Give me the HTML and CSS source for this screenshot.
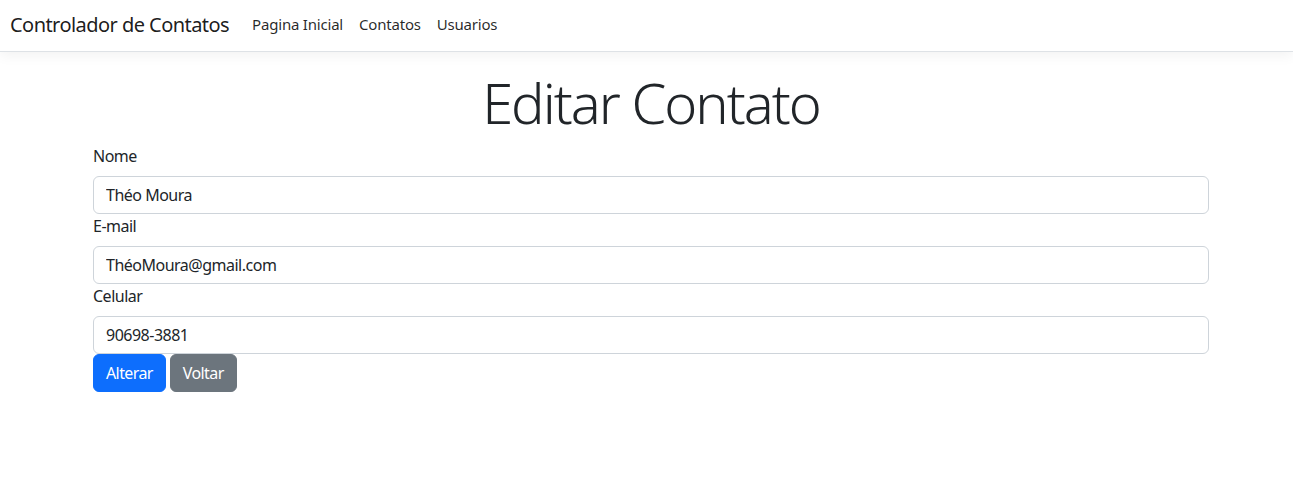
FILE: index.html
```html
<!DOCTYPE html>
<html lang="pt-BR">
<head>
<meta charset="utf-8">
<title>Editar Contato</title>
<link rel="stylesheet" href="styles.css">
</head>
<body>
<header class="navbar">
  <a class="brand" href="#">Controlador de Contatos</a>
  <nav class="nav">
    <a class="nav-link" href="#">Pagina Inicial</a>
    <a class="nav-link" href="#">Contatos</a>
    <a class="nav-link" href="#">Usuarios</a>
  </nav>
</header>
<main class="container">
  <h1 class="title">Editar Contato</h1>
  <form class="form">
    <label class="form-label" for="nome">Nome</label>
    <input class="form-control" id="nome" type="text" value="Théo Moura">
    <label class="form-label" for="email">E-mail</label>
    <input class="form-control" id="email" type="text" value="ThéoMoura@gmail.com">
    <label class="form-label" for="celular">Celular</label>
    <input class="form-control" id="celular" type="text" value="90698-3881">
    <div class="actions">
      <button class="btn btn-primary" type="button">Alterar</button>
      <button class="btn btn-secondary" type="button">Voltar</button>
    </div>
  </form>
</main>
</body>
</html>
```

FILE: styles.css
```css
* { box-sizing: border-box; }
html, body { margin: 0; padding: 0; }
body {
  font-family: "Segoe UI", "Noto Sans", "Open Sans", sans-serif;
  font-size: 16px;
  line-height: 1.5;
  letter-spacing: -0.5px;
  color: #212529;
  background: #fff;
}
.navbar {
  height: 52px;
  display: flex;
  align-items: center;
  padding: 0 10px 2px;
  border-bottom: 1px solid #dee2e6;
  box-shadow: 0 4px 12px rgba(0,0,0,0.05);
  background: #fff;
}
.brand {
  font-size: 20px;
  letter-spacing: -0.55px;
  color: rgba(0,0,0,0.9);
  text-decoration: none;
  margin-right: 15px;
}
.nav { display: flex; }
.nav-link {
  padding: 0 8px;
  color: rgba(0,0,0,0.85);
  text-decoration: none;
  font-size: 15px;
  letter-spacing: -0.2px;
}
.container {
  width: 1116px;
  margin-left: 93px;
  padding-top: 17px;
}
.title {
  margin: 0 0 8px;
  text-align: center;
  font-size: 56px;
  font-weight: 300;
  line-height: 67px;
  letter-spacing: -2px;
}
.form { display: flex; flex-direction: column; }
.form-label {
  display: block;
  margin-bottom: 8px;
  line-height: 24px;
  height: 24px;
}
.form-control {
  display: block;
  width: 100%;
  height: 38px;
  padding: 6px 12px;
  font: inherit;
  letter-spacing: inherit;
  color: #212529;
  border: 1px solid #ced4da;
  border-radius: 6px;
  background: #fff;
}
.actions { display: flex; gap: 4px; }
.btn {
  height: 38px;
  padding: 6px 12px;
  font: inherit;
  letter-spacing: -0.6px;
  color: #fff;
  border: 1px solid transparent;
  border-radius: 6px;
}
.btn-primary { background: #0d6efd; border-color: #0d6efd; }
.btn-secondary { background: #6c757d; border-color: #6c757d; }
```
